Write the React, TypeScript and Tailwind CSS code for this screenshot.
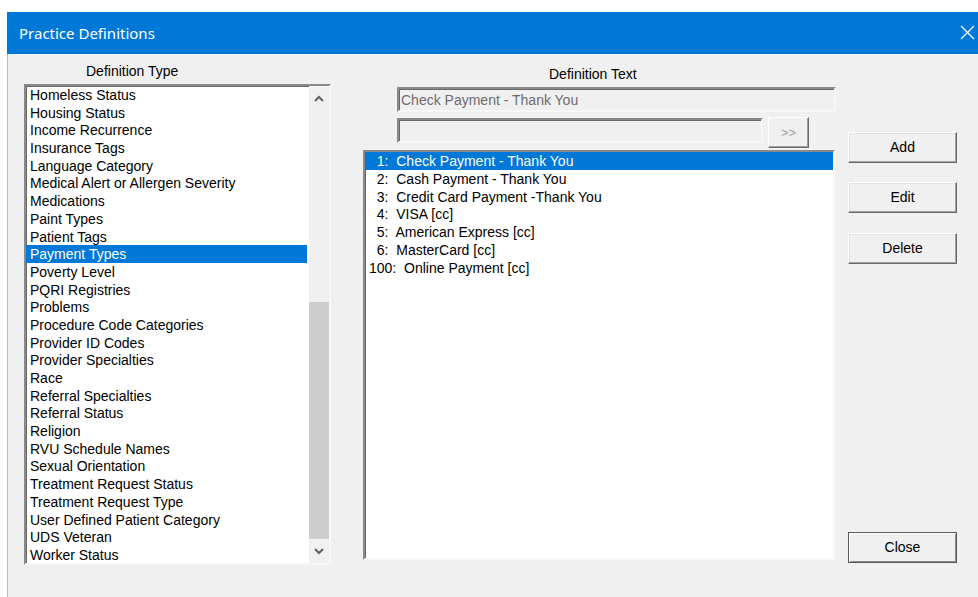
import React from 'react';

const definitionTypes = [
  'Homeless Status',
  'Housing Status',
  'Income Recurrence',
  'Insurance Tags',
  'Language Category',
  'Medical Alert or Allergen Severity',
  'Medications',
  'Paint Types',
  'Patient Tags',
  'Payment Types',
  'Poverty Level',
  'PQRI Registries',
  'Problems',
  'Procedure Code Categories',
  'Provider ID Codes',
  'Provider Specialties',
  'Race',
  'Referral Specialties',
  'Referral Status',
  'Religion',
  'RVU Schedule Names',
  'Sexual Orientation',
  'Treatment Request Status',
  'Treatment Request Type',
  'User Defined Patient Category',
  'UDS Veteran',
  'Worker Status',
];

const definitionTexts = [
  '  1:  Check Payment - Thank You',
  '  2:  Cash Payment - Thank You',
  '  3:  Credit Card Payment -Thank You',
  '  4:  VISA [cc]',
  '  5:  American Express [cc]',
  '  6:  MasterCard [cc]',
  '100:  Online Payment [cc]',
];

const sunken =
  'border-2 border-t-[#8a8a8a] border-l-[#8a8a8a] border-b-[#f7f7f7] border-r-[#f7f7f7] shadow-[inset_1px_1px_0_#696969]';

const WinButton: React.FC<{ label: string; isDefault?: boolean; className?: string }> = ({
  label,
  isDefault,
  className = '',
}) => (
  <button
    className={`w-[109px] h-[31px] bg-[#f0f0f0] text-[14px] text-black border ${
      isDefault
        ? 'border-[#5a5a5a] shadow-[inset_1px_1px_0_#ffffff,inset_-1px_-1px_0_#8a8a8a]'
        : 'border-t-[#ffffff] border-l-[#ffffff] border-b-[#6a6a6a] border-r-[#6a6a6a] shadow-[inset_-1px_-1px_0_#a0a0a0,inset_1px_1px_0_#e3e3e3]'
    } ${className}`}
  >
    {label}
  </button>
);

const Chevron: React.FC<{ up?: boolean }> = ({ up }) => (
  <svg width="10" height="7" viewBox="0 0 10 7">
    <path
      d={up ? 'M1 6 L5 2 L9 6' : 'M1 1 L5 5 L9 1'}
      fill="none"
      stroke="#606060"
      strokeWidth="2"
    />
  </svg>
);

export default function App() {
  return (
    <div className="h-[597px] overflow-hidden bg-white pt-[12px] pl-[7px] font-['Liberation_Sans',Arial,sans-serif] text-[14px]">
      <div className="flex flex-col h-full">
        {/* title bar */}
        <div className="h-[42px] bg-[#0078d7] flex items-center justify-between pl-[12px] pr-[3px]">
          <span className="text-white text-[15px] font-['Noto_Sans',sans-serif]">Practice Definitions</span>
          <svg width="15" height="15" viewBox="0 0 15 15" className="mb-[1px]">
            <path d="M1 1 L14 14 M14 1 L1 14" stroke="#ffffff" strokeWidth="1.2" />
          </svg>
        </div>

        <div className="flex-1 bg-[#f0f0f0] border-l border-[#9cc4ea] flex items-start">
          {/* definition type list */}
          <div className="ml-[16px] w-[307px] pt-[9px]">
            <div className="pl-[62px] leading-[17px] text-black">Definition Type</div>
            <div className={`mt-[4px] h-[481px] bg-white flex ${sunken}`}>
              <ul className="flex-1 mr-[2px] leading-[18.7px] text-black">
                {definitionTypes.map((t) => (
                  <li
                    key={t}
                    className={`h-[17.7px] pl-[4px] whitespace-nowrap ${
                      t === 'Payment Types' ? 'bg-[#0078d7] text-white' : ''
                    }`}
                  >
                    {t}
                  </li>
                ))}
              </ul>
              <div className="w-[20px] bg-[#f0f0f0] flex flex-col">
                <div className="h-[24px] flex items-center justify-center">
                  <Chevron up />
                </div>
                <div className="flex-1 flex flex-col">
                  <div className="h-[192px]" />
                  <div className="flex-1 bg-[#cdcdcd]" />
                </div>
                <div className="h-[24px] flex items-center justify-center">
                  <Chevron />
                </div>
              </div>
            </div>
          </div>

          {/* definition text */}
          <div className="ml-[31px] w-[475px] pt-[12px]">
            <div className="pl-[187px] leading-[17px] text-black">Definition Text</div>
            <div className={`mt-[4px] ml-[35px] w-[439px] h-[25px] bg-[#f0f0f0] flex items-center pl-[2px] pt-[2px] text-[#6d6d6d] ${sunken}`}>
              Check Payment - Thank You
            </div>
            <div className="flex items-start ml-[35px] mt-[5px]">
              <div className={`mt-[1px] w-[366px] h-[25px] bg-[#f0f0f0] ${sunken}`} />
              <button className="ml-[5px] w-[41px] h-[31px] bg-[#f0f0f0] text-[#a0a0a0] text-[13px] border border-t-[#ffffff] border-l-[#ffffff] border-b-[#6a6a6a] border-r-[#6a6a6a] shadow-[inset_-1px_-1px_0_#a0a0a0]">
                &gt;&gt;
              </button>
            </div>
            <div className={`mt-[2px] ml-[1px] w-[472px] h-[410px] bg-white ${sunken}`}>
              <ul className="leading-[19px] text-black">
                {definitionTexts.map((t, i) => (
                  <li
                    key={t}
                    className={`h-[17.8px] pl-[4px] whitespace-pre ${i === 0 ? 'bg-[#0078d7] text-white' : ''}`}
                  >
                    {t}
                  </li>
                ))}
              </ul>
            </div>
          </div>

          {/* actions */}
          <div className="ml-[11px] pt-[78px] flex flex-col">
            <WinButton label="Add" />
            <WinButton label="Edit" className="mt-[19px]" />
            <WinButton label="Delete" className="mt-[20px]" />
            <WinButton label="Close" isDefault className="mt-[268px]" />
          </div>
        </div>
      </div>
    </div>
  );
}
